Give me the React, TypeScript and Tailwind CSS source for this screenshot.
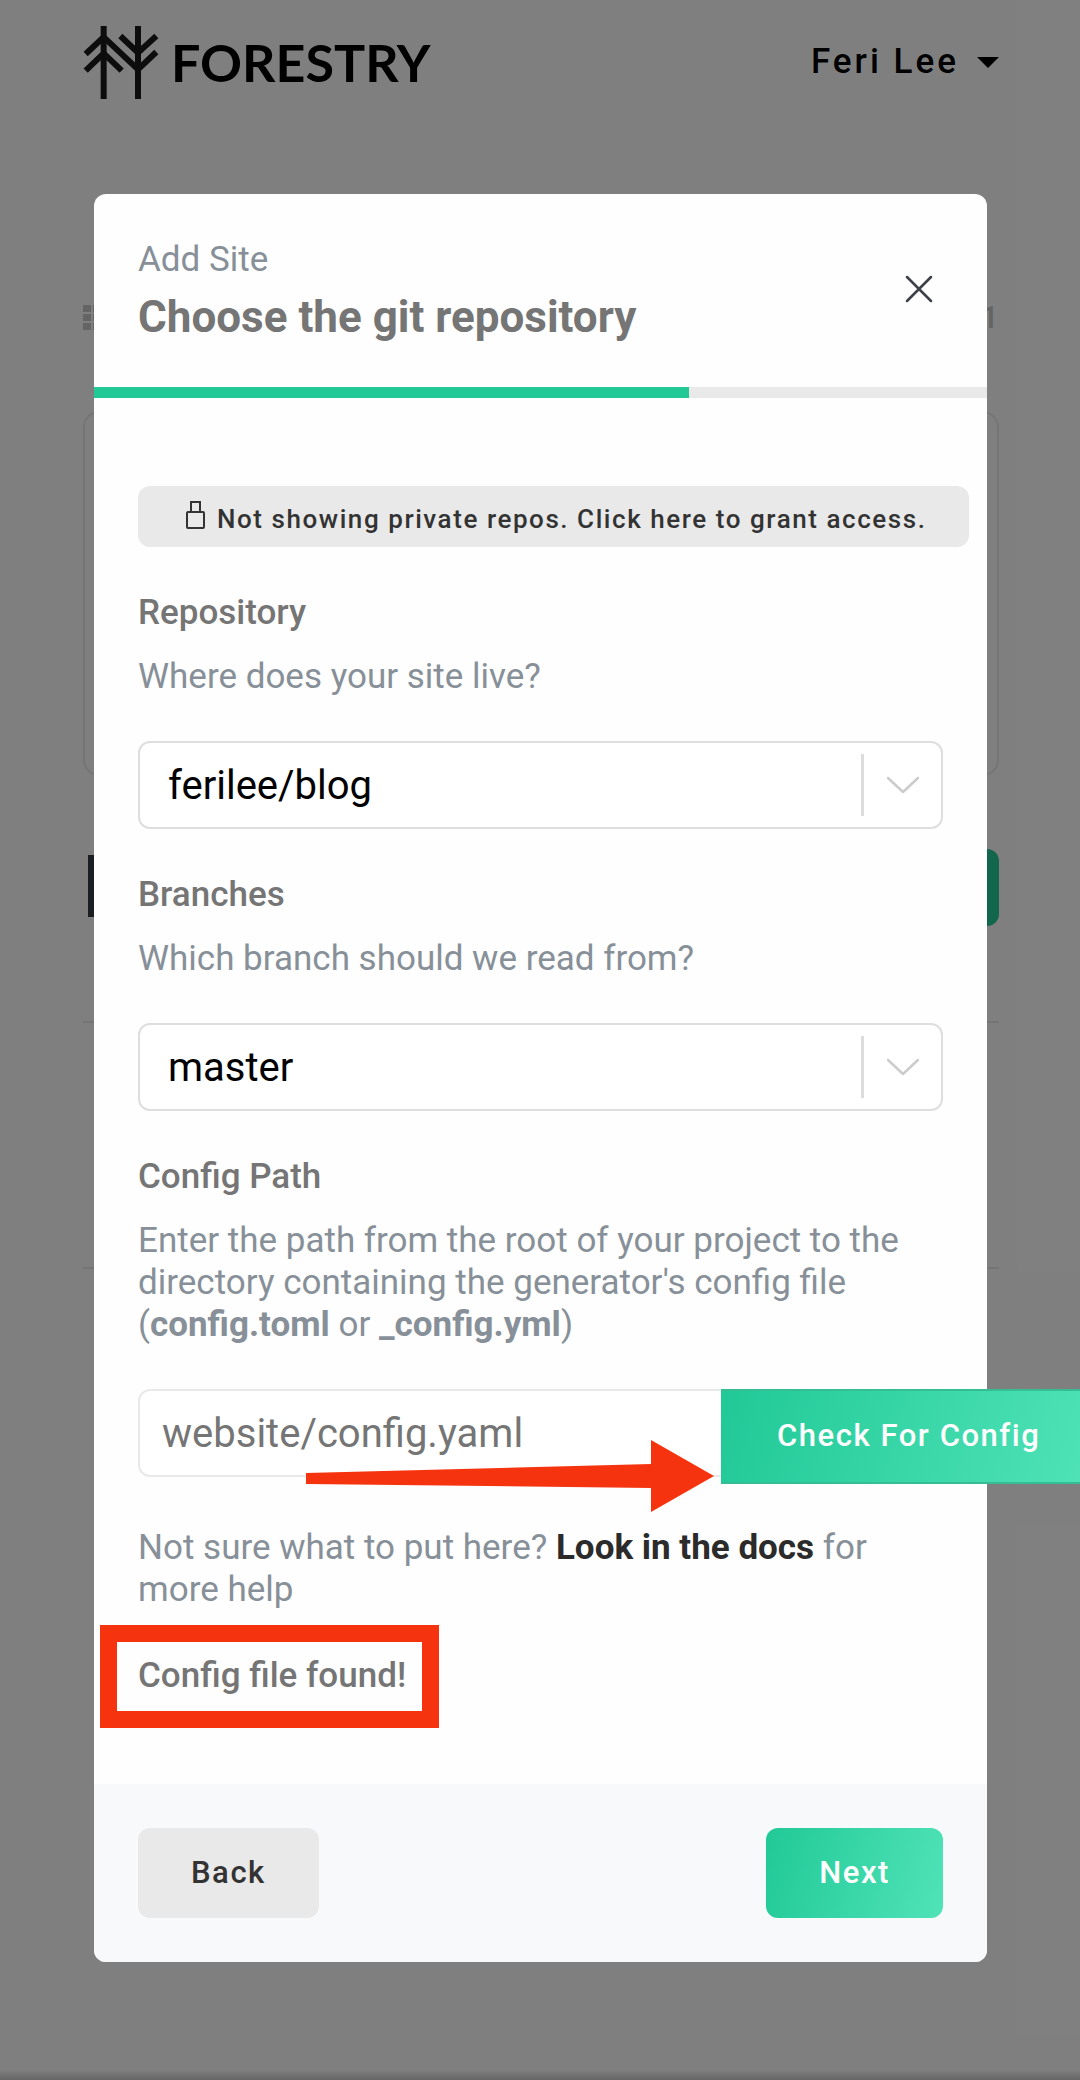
import React, { useState } from "react";

const hintClass = "text-[35px] leading-[42px] text-[#879098]";
const labelClass = "block text-[35px] leading-[42px] font-medium text-[#757575]";

function ForestryMark() {
  return (
    <svg viewBox="68 78 228 219" className="h-[73px] w-[76px]" fill="none" stroke="#1a1a1a" strokeWidth="18" aria-hidden="true">
      <path d="M130 78V297M233 78V297" />
      <path d="M76 162L130 111L233 208L288 156" />
      <path d="M76 212L130 160L184 212" />
      <path d="M180 108L233 158L288 108" />
    </svg>
  );
}

function DotsIcon() {
  return (
    <svg viewBox="0 0 28 25" className="h-[25px] w-7" fill="#c8c8c8" aria-hidden="true">
      <path d="M0 0h8v7H0zM10 0h8v7h-8zM20 0h8v7h-8zM0 9h8v7H0zM10 9h8v7h-8zM20 9h8v7h-8zM0 18h8v7H0zM10 18h8v7h-8zM20 18h8v7h-8z" />
    </svg>
  );
}

function LockIcon() {
  return (
    <svg viewBox="0 0 20 30" className="mb-[9px] h-[30px] w-5" fill="none" stroke="#333" strokeWidth="2" aria-hidden="true">
      <rect x="2" y="12" width="17" height="16" rx="1" />
      <rect x="6" y="2" width="9" height="10" />
    </svg>
  );
}

function SelectField({ id, label, hint, value }: { id: string; label: string; hint: string; value: string }) {
  return (
    <div>
      <label htmlFor={id} className={labelClass}>{label}</label>
      <p className={`${hintClass} mt-[22px]`}>{hint}</p>
      <div className="relative mt-[43px]">
        <select
          id={id}
          defaultValue={value}
          className="h-[88px] w-full appearance-none rounded-xl border-2 border-[#dedede] bg-white pt-0.5 pr-24 pl-7 text-[40px] text-black"
        >
          <option>{value}</option>
        </select>
        <div className="pointer-events-none absolute inset-y-[13px] right-0 flex w-[82px] items-center justify-center border-l-3 border-[#dcdcdc] pr-0.5">
          <svg viewBox="0 0 32 20" className="h-5 w-8" fill="none" stroke="#ccc" strokeWidth="2.5" strokeLinecap="round" strokeLinejoin="round" aria-hidden="true">
            <path d="M1 3L16 17L31 3" />
          </svg>
        </div>
      </div>
    </div>
  );
}

function SitesPage() {
  return (
    <div className="pr-[81px] pl-[83px]">
      <header className="flex h-[124px] items-center justify-between">
        <a href="#" className="flex items-center gap-3">
          <ForestryMark />
          <span className="font-[Lato] text-[52px] leading-none font-bold text-black">FORESTRY</span>
        </a>
        <button type="button" className="flex items-center gap-[18px] text-[35px] font-medium tracking-[3px] text-black">
          Feri Lee
          <svg viewBox="0 0 22 11" className="h-[11px] w-[22px]" aria-hidden="true">
            <path d="M0 0H22L11 11Z" fill="black" />
          </svg>
        </button>
      </header>
      <div className="mt-[168px] flex h-[50px] items-center justify-between">
        <DotsIcon />
        <span className="text-[32px] font-medium text-[#c8c8c8]">1</span>
      </div>
      <div className="mt-[69px] h-[365px] rounded-2xl border-2 border-[#eaeaea]" />
      <div className="mt-[73px] flex items-start justify-between">
        <div className="mt-1.5 ml-[5px] h-[62px] w-20 bg-[#343c42]" />
        <div className="h-[77px] w-40 rounded-xl bg-[#24cc96]" />
      </div>
      <div className="mt-[95px] h-[248px] border-y-2 border-[#eaeaea]" />
    </div>
  );
}

export default function App() {
  const [path, setPath] = useState("");
  return (
    <div className="relative min-h-screen overflow-hidden bg-white font-[Roboto,sans-serif]">
      <SitesPage />
      <div className="absolute inset-0 bg-black/50 pt-[194px] pr-[93px] pl-[94px]">
        <section role="dialog" aria-labelledby="dialog-title" className="rounded-xl bg-[#fefefe]">
          <header className="flex h-[193px] items-center justify-between px-11">
            <div>
              <p className={hintClass}>Add Site</p>
              <h1 id="dialog-title" className="mt-2.5 text-[44px] leading-[52px] font-bold text-[#757575]">Choose the git repository</h1>
            </div>
            <button type="button" aria-label="Close" className="mb-1 flex size-12 items-center justify-center">
              <svg viewBox="0 0 28 28" className="size-7" fill="none" stroke="#3d4049" strokeWidth="2.5" strokeLinecap="round" aria-hidden="true">
                <path d="M2 2L26 26M26 2L2 26" />
              </svg>
            </button>
          </header>
          <div className="h-[11px] bg-[#e9e9e9]">
            <div className="h-full w-2/3 bg-[#21c997]" />
          </div>

          <div className="px-11 pt-[88px] pb-14">
            <button type="button" className="flex h-[61px] w-max items-center gap-3 rounded-xl bg-[#e9e9e9] pt-[5px] pr-[42px] pl-[47px] text-[26px] font-medium tracking-[0.06em] text-[#333]">
              <LockIcon />
              Not showing private repos. Click here to grant access.
            </button>

            <div className="mt-[45px] flex flex-col gap-[45px]">
              <SelectField id="repository" label="Repository" hint="Where does your site live?" value="ferilee/blog" />
              <SelectField id="branch" label="Branches" hint="Which branch should we read from?" value="master" />
              <div>
                <label htmlFor="config" className={labelClass}>Config Path</label>
                <p className={`${hintClass} mt-[22px]`}>
                  Enter the path from the root of your project to the directory containing the generator's config file (<b>config.toml</b> or <b>_config.yml</b>)
                </p>
                <div className="relative mt-[43px] flex items-start">
                  <input
                    id="config"
                    value={path}
                    onChange={(e) => setPath(e.target.value)}
                    placeholder="website/config.yaml"
                    className="h-[88px] w-[583px] shrink-0 rounded-l-xl border-2 border-r-0 border-[#e9e9e9] bg-white px-[22px] text-[40px] placeholder:text-[#757575]"
                  />
                  <button type="button" className="h-[95px] shrink-0 border-y-2 border-[#35bd93] bg-linear-[105deg,#21c997,#50e3b8] px-14 text-[31px] font-medium tracking-wider whitespace-nowrap text-white">
                    Check For Config
                  </button>
                  <svg viewBox="0 0 408 72" className="absolute top-[51px] left-[168px] h-[72px] w-[408px]" aria-hidden="true">
                    <path d="M0 33L345 24V0L408 36L345 72V48L0 44Z" fill="#f6330f" />
                  </svg>
                </div>
              </div>
            </div>

            <p className={`${hintClass} mt-[43px]`}>
              Not sure what to put here? <a href="#" className="font-bold text-[#2b2b2b]">Look in the docs</a> for more help
            </p>
            <div className="mt-3.5 -ml-[38px] w-max border-[17px] border-[#f6330f] pt-[13px] pr-4 pb-[14px] pl-[21px]">
              <p className={labelClass}>Config file found!</p>
            </div>
          </div>

          <footer className="flex items-center justify-between rounded-b-xl bg-[#f8f9fb] p-11">
            <button type="button" className="h-[90px] rounded-xl bg-[#e9e9e9] px-[53px] text-[31px] font-medium tracking-wider text-[#333]">Back</button>
            <button type="button" className="h-[90px] rounded-xl bg-linear-[105deg,#21c997,#50e3b8] px-[53px] text-[31px] font-medium tracking-wider text-white">Next</button>
          </footer>
        </section>
        <div className="absolute inset-x-0 bottom-0 h-2.5 bg-linear-to-b from-transparent to-black/20" />
      </div>
    </div>
  );
}
